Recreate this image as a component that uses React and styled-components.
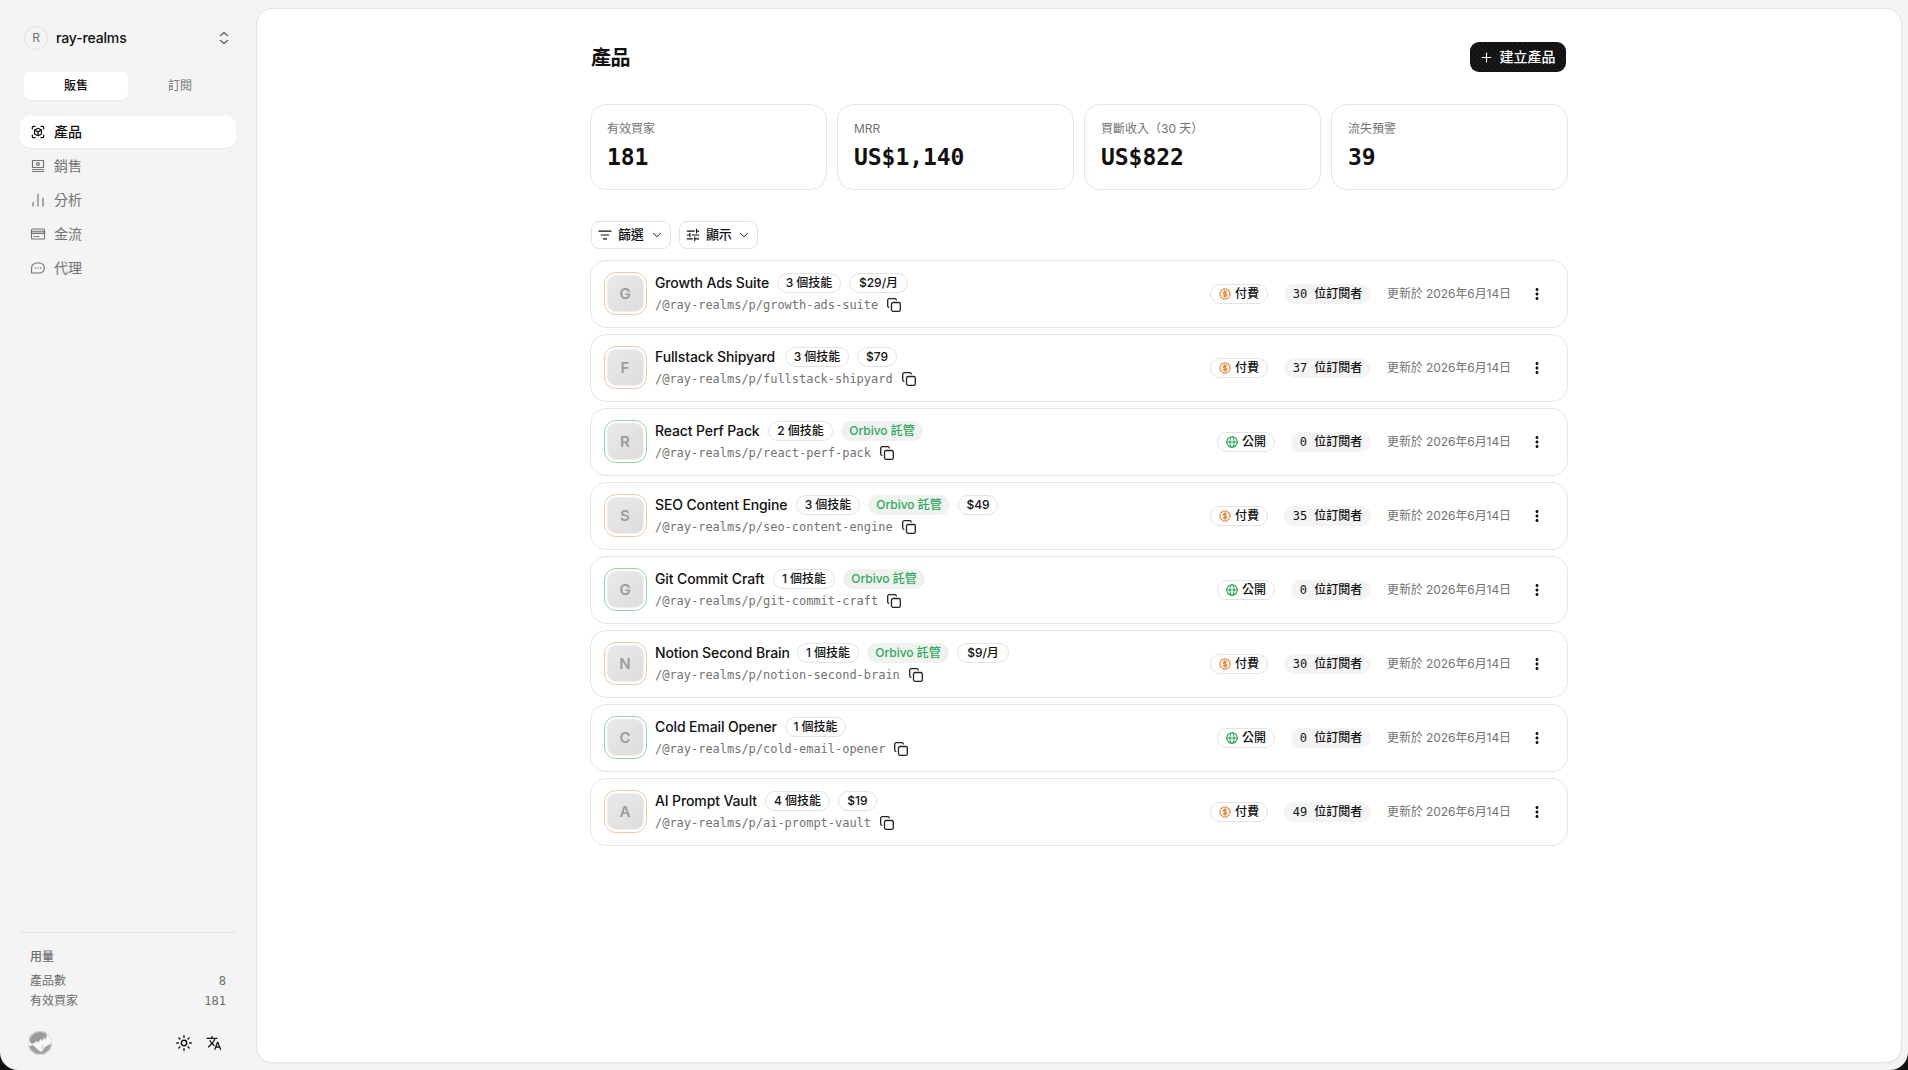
import React from 'react';
import styled, { createGlobalStyle } from 'styled-components';
import { Plus, ChevronDown } from 'lucide-react';
import { MdTranslate, MdMoreVert } from 'react-icons/md';

const SANS = `Inter, "Noto Sans CJK TC", sans-serif`;
const MONO = `"DejaVu Sans Mono", "Noto Sans CJK TC", monospace`;

const GlobalStyle = createGlobalStyle`
  *, *::before, *::after { box-sizing: border-box; }
  html { background: #111; }
  body { margin: 0; font-family: ${SANS}; color: #111; font-size: 14px; overflow: hidden; }
  button { font: inherit; color: inherit; border: 0; background: none; padding: 0; }
  svg { display: block; flex: none; }
`;

const Shell = styled.div`
  display: flex;
  height: 1070px;
  background: #f4f4f4;
  border-radius: 0 0 18px 18px;
`;

const Sidebar = styled.aside`
  width: 256px;
  flex: none;
  display: flex;
  flex-direction: column;
  padding: 22px 20px 15px;
`;

const Workspace = styled.button`
  display: flex;
  align-items: center;
  height: 32px;
  padding: 0 4px;
`;

const WorkspaceBadge = styled.span`
  width: 24px;
  height: 24px;
  border-radius: 50%;
  border: 1px solid #e0e0e0;
  display: grid;
  place-items: center;
  font-size: 12px;
  line-height: 20px;
  padding-bottom: 1px;
  color: #6f6f6f;
`;

const WorkspaceName = styled.span`
  flex: 1;
  text-align: left;
  margin-left: 8px;
  font-weight: 500;
  line-height: 20px;
  padding-bottom: 1px;
  letter-spacing: -0.15px;
`;

const Tabs = styled.div`
  display: grid;
  grid-template-columns: 1fr 1fr;
  margin: 18px 4px 16px;
`;

const Tab = styled.button`
  height: 28px;
  border-radius: 8px;
  font-size: 12px;
  line-height: 16px;
  font-weight: ${(p) => (p.$active ? 500 : 400)};
  color: ${(p) => (p.$active ? '#111' : '#737373')};
  background: ${(p) => (p.$active ? '#fff' : 'transparent')};
  box-shadow: ${(p) => (p.$active ? '0 1px 1px rgba(0,0,0,.05)' : 'none')};
`;

const Nav = styled.nav`
  display: flex;
  flex-direction: column;
  gap: 2px;
`;

const NavItem = styled.a`
  display: flex;
  align-items: center;
  gap: 8px;
  height: 32px;
  padding: 0 10px;
  border-radius: 10px;
  line-height: 20px;
  font-weight: ${(p) => (p.$active ? 500 : 400)};
  color: ${(p) => (p.$active ? '#111' : '#737373')};
  background: ${(p) => (p.$active ? '#fff' : 'transparent')};
  box-shadow: ${(p) => (p.$active ? '0 1px 1px rgba(0,0,0,.05)' : 'none')};
`;

const Usage = styled.section`
  margin-top: auto;
  border-top: 1px solid #e2e2e2;
  padding: 14px 10px 0;
  font-size: 12px;
  line-height: 20px;
  color: #6c6c6c;
`;

const UsageTitle = styled.div`
  font-weight: 500;
  margin-bottom: 4px;
`;

const UsageRow = styled.div`
  display: flex;
  justify-content: space-between;
  height: 20px;
`;

const Mono = styled.span`
  font-family: ${MONO};
`;

const SideFooter = styled.footer`
  display: flex;
  align-items: center;
  margin-top: 20px;
  padding: 0 14px 0 8px;
  height: 24px;
`;

const FooterActions = styled.div`
  display: flex;
  gap: 14px;
  margin-left: auto;
`;

const Panel = styled.main`
  flex: 1;
  margin: 8px 6px 7px 0;
  background: #fff;
  border: 1px solid #e3e3e3;
  border-radius: 16px;
  box-shadow: 0 1px 2px rgba(0, 0, 0, 0.04);
  display: flex;
  justify-content: center;
`;

const Content = styled.div`
  width: 978px;
  padding-top: 33px;
`;

const Header = styled.header`
  display: flex;
  justify-content: space-between;
  align-items: center;
  height: 30px;
  padding: 0 2px 0 1px;
`;

const Title = styled.h1`
  margin: 0;
  padding-top: 1px;
  font-size: 20px;
  line-height: 28px;
  font-weight: 600;
  letter-spacing: -0.5px;
`;

const CreateButton = styled.button`
  display: flex;
  align-items: center;
  gap: 6px;
  width: 96px;
  height: 30px;
  padding: 0 0 0 8.5px;
  border-radius: 9px;
  color: #fff;
  background-color: #121212;
  background-image: radial-gradient(circle, #303030 0.6px, transparent 0.9px),
    radial-gradient(circle, #303030 0.6px, transparent 0.9px);
  background-size: 5px 5px;
  background-position: 0 0, 2.5px 2.5px;
  font-weight: 500;
  & > span { line-height: 20px; padding-bottom: 1px; }
`;

const Stats = styled.section`
  display: grid;
  grid-template-columns: repeat(4, 1fr);
  gap: 10px;
  margin-top: 32px;
`;

const StatCard = styled.div`
  height: 86px;
  border: 1px solid #e7e7e7;
  border-radius: 16px;
  padding: 16px 16px;
`;

const StatLabel = styled.div`
  font-size: 12px;
  line-height: 16px;
  height: 16px;
  color: #737373;
`;

const StatValue = styled.div`
  margin-top: 4px;
  font-family: ${MONO};
  font-size: 23px;
  line-height: 32px;
  font-weight: 700;
  letter-spacing: -0.05px;
`;

const Toolbar = styled.div`
  display: flex;
  gap: 8px;
  margin: 31px 1px 11px;
`;

const ToolButton = styled.button`
  display: flex;
  align-items: center;
  width: ${(p) => p.$width}px;
  height: 28px;
  padding: 0 6px 0 6px;
  border: 1px solid #e2e2e2;
  border-radius: 8px;
  font-size: 13px;
  font-weight: 500;
  & > span { flex: 1; text-align: left; margin-left: 6px; letter-spacing: -0.3px; line-height: 18px; padding-bottom: 2px; }
`;

const List = styled.ul`
  list-style: none;
  margin: 0;
  padding: 0;
  display: flex;
  flex-direction: column;
  gap: 6px;
`;

const Row = styled.li`
  display: flex;
  align-items: center;
  height: 68px;
  padding: 0 21px 0 12px;
  border: 1px solid #e7e7e7;
  border-radius: 16px;
`;

const Thumb = styled.div`
  width: 43px;
  height: 43px;
  padding: 2px;
  border: 1.5px solid ${(p) => (p.$paid ? '#efc9a5' : '#93d3aa')};
  border-radius: 12px;
  flex: none;
  margin: 0 0 1px 0.5px;
`;

const ThumbFace = styled.div`
  height: 100%;
  border-radius: 9px;
  border: 1px solid #efefef;
  background: linear-gradient(135deg, #e9e9e9, #dfdddc);
  display: grid;
  place-items: center;
  font-size: 15px;
  line-height: 18px;
  font-weight: 600;
  color: #9b9b9b;
`;

const Info = styled.div`
  margin-left: 8.5px;
  flex: 1;
`;

const NameLine = styled.div`
  display: flex;
  align-items: center;
  gap: 8px;
  height: 20px;
`;

const Name = styled.span`
  font-weight: 500;
  white-space: nowrap;
  width: ${(p) => p.$width}px;
  line-height: 20px;
  letter-spacing: -0.12px;
`;

const Badge = styled.span`
  display: inline-flex;
  align-items: center;
  justify-content: center;
  gap: 4px;
  height: 20px;
  width: ${(p) => p.$width}px;
  border-radius: 10px;
  border: 1px solid ${(p) => (p.$filled ? 'transparent' : '#e2e2e2')};
  background: ${(p) => p.$filled || '#fff'};
  background-clip: border-box;
  color: ${(p) => p.$color || '#111'};
  font-family: ${(p) => (p.$mono ? MONO : SANS)};
  font-size: 12px;
  line-height: 16px;
  font-weight: 500;
  white-space: pre;
`;

const PathLine = styled.div`
  display: flex;
  align-items: center;
  gap: 9px;
  height: 20px;
  margin-top: 2px;
  font-family: ${MONO};
  font-size: 12px;
  line-height: 16px;
  letter-spacing: -0.025px;
  color: #737373;
`;

const Meta = styled.div`
  display: flex;
  align-items: center;
  gap: 16px;
`;

const Updated = styled.span`
  width: 123px;
  font-size: 12px;
  line-height: 16px;
  padding-bottom: 1px;
  color: #737373;
  white-space: nowrap;
  letter-spacing: -0.08px;
`;

const MoreButton = styled.button`
  margin-left: 2px;
`;

const Line = ({ size = 16, sw = 1.2, children }) => (
  <svg width={size} height={size} viewBox="0 0 16 16" fill="none" stroke="currentColor" strokeWidth={sw} strokeLinecap="round" strokeLinejoin="round">
    {children}
  </svg>
);

const ProductIcon = () => (
  <Line>
    <path d="M2.3 5V3.6A1.3 1.3 0 0 1 3.6 2.3H5M11 2.3h1.4a1.3 1.3 0 0 1 1.3 1.3V5M13.7 11v1.4a1.3 1.3 0 0 1-1.3 1.3H11M5 13.7H3.6a1.3 1.3 0 0 1-1.3-1.3V11" />
    <path d="M8 4.2 11.5 6v4L8 11.8 4.5 10V6zM4.5 6 8 7.9 11.5 6M8 7.9v3.9" />
  </Line>
);
const SalesIcon = () => (
  <Line>
    <rect x="2.5" y="2.5" width="11" height="7" />
    <circle cx="8" cy="6" r="1.3" />
    <path d="M2.5 11.5h11M2.5 13.5h11" />
  </Line>
);
const ChartIcon = () => (
  <Line>
    <path d="M3 10.5V14M8 2v12M13 6v8" />
  </Line>
);
const CardIcon = () => (
  <Line sw={1.1}>
    <rect x="1.5" y="3" width="13" height="10" rx="1" />
    <path d="M1.5 5.2h13M1.5 7.5h13M4 10.5h1.6M7 10.5h2" />
    <path d="M1.5 6.3h13" strokeWidth="2" strokeOpacity=".4" />
  </Line>
);
const ChatIcon = () => (
  <Line sw={1.1}>
    <path d="M1.6 13V8a5 5 0 0 1 5-5h2.8a5 5 0 0 1 0 10z" />
    <path d="M5.3 8h.1M8 8h.1M10.7 8h.1" strokeWidth="1.3" />
  </Line>
);
const SortIcon = () => (
  <Line size={14} sw={1.3}>
    <path d="M1 3.5h14M3.7 8h8.6M6.2 12.5h3.6" />
  </Line>
);
const TuneIcon = () => (
  <Line size={14} sw={1.3}>
    <path d="M1.5 3.5h8M12 3.5h2.5M12 1.5v4M1.5 8h2.5M7 8h7.5M4.5 6v4M1.5 12.5h6M10 12.5h4.5M10 10.5v4" />
  </Line>
);
const UpDownIcon = () => (
  <Line sw={1.4}>
    <path d="M4.5 5.5 8 2.5l3.5 3M4.5 10.5 8 13.5l3.5-3" stroke="#666" />
  </Line>
);
const SunIcon = () => (
  <Line sw={1.4}>
    <circle cx="8" cy="8" r="2.7" />
    <path d="M8 .8v1.6M8 13.6v1.6M.8 8h1.6M13.6 8h1.6M2.9 2.9l1 1M12.1 12.1l1 1M2.9 13.1l1-1M12.1 3.9l1-1" />
  </Line>
);
const CopyIcon = () => (
  <svg width="14" height="14" viewBox="0 0 14 14" fill="none" stroke="#222" strokeWidth="1.3" strokeLinecap="round" strokeLinejoin="round">
    <rect x="4.5" y="4.5" width="8.8" height="8.8" rx="1.6" />
    <path d="M1.8 9.3A1.4 1.4 0 0 1 .7 8V2.2A1.5 1.5 0 0 1 2.2.7H8a1.4 1.4 0 0 1 1.3 1.1" />
  </svg>
);
const CoinIcon = () => (
  <svg width="12" height="12" viewBox="0 0 12 12" fill="none" stroke="#e08a3c">
    <circle cx="6" cy="6" r="5" strokeWidth="1.4" strokeDasharray="2.1 .5" />
    <path d="M7.8 4.4C7.4 3.8 6.7 3.6 6 3.6c-1 0-1.7.5-1.7 1.2 0 1.5 3.5.8 3.5 2.4 0 .8-.8 1.2-1.8 1.2-.8 0-1.5-.3-1.8-1M6 2.3v7.4" strokeWidth="1.4" />
  </svg>
);
const GlobeIcon = () => (
  <svg width="12" height="12" viewBox="0 0 12 12" fill="none" stroke="#2fa75a" strokeWidth="1.1">
    <circle cx="6" cy="6" r="5.3" />
    <ellipse cx="6" cy="6" rx="2.1" ry="5.3" />
    <path d="M.7 6h10.6" />
  </svg>
);
const UserAvatar = () => (
  <svg width="24" height="24" viewBox="0 0 24 24">
    <defs>
      <clipPath id="user-avatar">
        <circle cx="12" cy="12" r="12" />
      </clipPath>
    </defs>
    <g clipPath="url(#user-avatar)">
      <rect width="24" height="24" fill="#f7f7f7" />
      <path d="M2 0h16.5l.3 5-1.6 4-1-2.5-2.2 3.4-1.4-2.2-2.4 4L8.6 10 6 12.3 3.6 13 1 9z" fill="#9b9b9b" />
      <path d="M0 15.5 5 14l4.2 4 3 2.5h1.6L17 16l7-4v12H0z" fill="#a0a0a0" />
      <path d="M13.8 18 15 14.5" stroke="#e2b98c" strokeWidth="1" />
    </g>
    <circle cx="12" cy="12" r="11.5" fill="none" stroke="#dcdcdc" />
  </svg>
);

const NAV = [
  ['產品', ProductIcon],
  ['銷售', SalesIcon],
  ['分析', ChartIcon],
  ['金流', CardIcon],
  ['代理', ChatIcon],
];

const STATS = [
  ['有效買家', '181'],
  ['MRR', 'US$1,140'],
  ['買斷收入（30 天）', 'US$822'],
  ['流失預警', '39'],
];

const PRODUCTS = [
  { name: 'Growth Ads Suite', w: 114, skills: 3, sw: 64, price: '$29/月', pw: 59, slug: 'growth-ads-suite', subs: 30 },
  { name: 'Fullstack Shipyard', w: 122, skills: 3, sw: 64, price: '$79', pw: 40, slug: 'fullstack-shipyard', subs: 37 },
  { name: 'React Perf Pack', w: 105, skills: 2, sw: 65, hosted: true, slug: 'react-perf-pack', subs: 0, free: true },
  { name: 'SEO Content Engine', w: 133, skills: 3, sw: 64, hosted: true, price: '$49', pw: 40, slug: 'seo-content-engine', subs: 35 },
  { name: 'Git Commit Craft', w: 110, skills: 1, sw: 62, hosted: true, slug: 'git-commit-craft', subs: 0, free: true },
  { name: 'Notion Second Brain', w: 134, skills: 1, sw: 62, hosted: true, price: '$9/月', pw: 52, slug: 'notion-second-brain', subs: 30 },
  { name: 'Cold Email Opener', w: 122, skills: 1, sw: 61, slug: 'cold-email-opener', subs: 0, free: true },
  { name: 'AI Prompt Vault', w: 102, skills: 4, sw: 65, price: '$19', pw: 39, slug: 'ai-prompt-vault', subs: 49 },
];

const ProductRow = ({ p }) => (
  <Row>
    <Thumb $paid={!p.free}>
      <ThumbFace>{p.name[0]}</ThumbFace>
    </Thumb>
    <Info>
      <NameLine>
        <Name $width={p.w}>{p.name}</Name>
        <Badge $width={p.sw}>{p.skills} 個技能</Badge>
        {p.hosted && <Badge $width={82} $filled="#eef3f0" $color="#2fa75a">Orbivo 託管</Badge>}
        {p.price && <Badge $width={p.pw}>{p.price}</Badge>}
      </NameLine>
      <PathLine>
        <span>/@ray-realms/p/{p.slug}</span>
        <CopyIcon />
      </PathLine>
    </Info>
    <Meta>
      <Badge $width={58}>
        {p.free ? <GlobeIcon /> : <CoinIcon />}
        <span>{p.free ? '公開' : '付費'}</span>
      </Badge>
      <Badge $mono $filled="#f4f4f4" $width={p.subs > 9 ? 87 : 80}>{`${p.subs} 位訂閱者`}</Badge>
      <Updated>更新於 2026年6月14日</Updated>
      <MoreButton><MdMoreVert size={18} /></MoreButton>
    </Meta>
  </Row>
);

export default function App() {
  return (
    <Shell>
      <GlobalStyle />
      <Sidebar>
        <Workspace>
          <WorkspaceBadge>R</WorkspaceBadge>
          <WorkspaceName>ray-realms</WorkspaceName>
          <UpDownIcon />
        </Workspace>
        <Tabs>
          <Tab $active>販售</Tab>
          <Tab>訂閱</Tab>
        </Tabs>
        <Nav>
          {NAV.map(([label, Icon], i) => (
            <NavItem key={label} $active={i === 0}>
              <Icon />
              {label}
            </NavItem>
          ))}
        </Nav>
        <Usage>
          <UsageTitle>用量</UsageTitle>
          <UsageRow><span>產品數</span><Mono>8</Mono></UsageRow>
          <UsageRow><span>有效買家</span><Mono>181</Mono></UsageRow>
        </Usage>
        <SideFooter>
          <UserAvatar />
          <FooterActions>
            <SunIcon />
            <MdTranslate size={16} />
          </FooterActions>
        </SideFooter>
      </Sidebar>
      <Panel>
        <Content>
          <Header>
            <Title>產品</Title>
            <CreateButton>
              <Plus size={15} strokeWidth={1.8} />
              <span>建立產品</span>
            </CreateButton>
          </Header>
          <Stats>
            {STATS.map(([label, value]) => (
              <StatCard key={label}>
                <StatLabel>{label}</StatLabel>
                <StatValue>{value}</StatValue>
              </StatCard>
            ))}
          </Stats>
          <Toolbar>
            <ToolButton $width={80}>
              <SortIcon />
              <span>篩選</span>
              <ChevronDown size={14} strokeWidth={1.7} />
            </ToolButton>
            <ToolButton $width={79}>
              <TuneIcon />
              <span>顯示</span>
              <ChevronDown size={14} strokeWidth={1.7} />
            </ToolButton>
          </Toolbar>
          <List>
            {PRODUCTS.map((p) => <ProductRow key={p.slug} p={p} />)}
          </List>
        </Content>
      </Panel>
    </Shell>
  );
}
